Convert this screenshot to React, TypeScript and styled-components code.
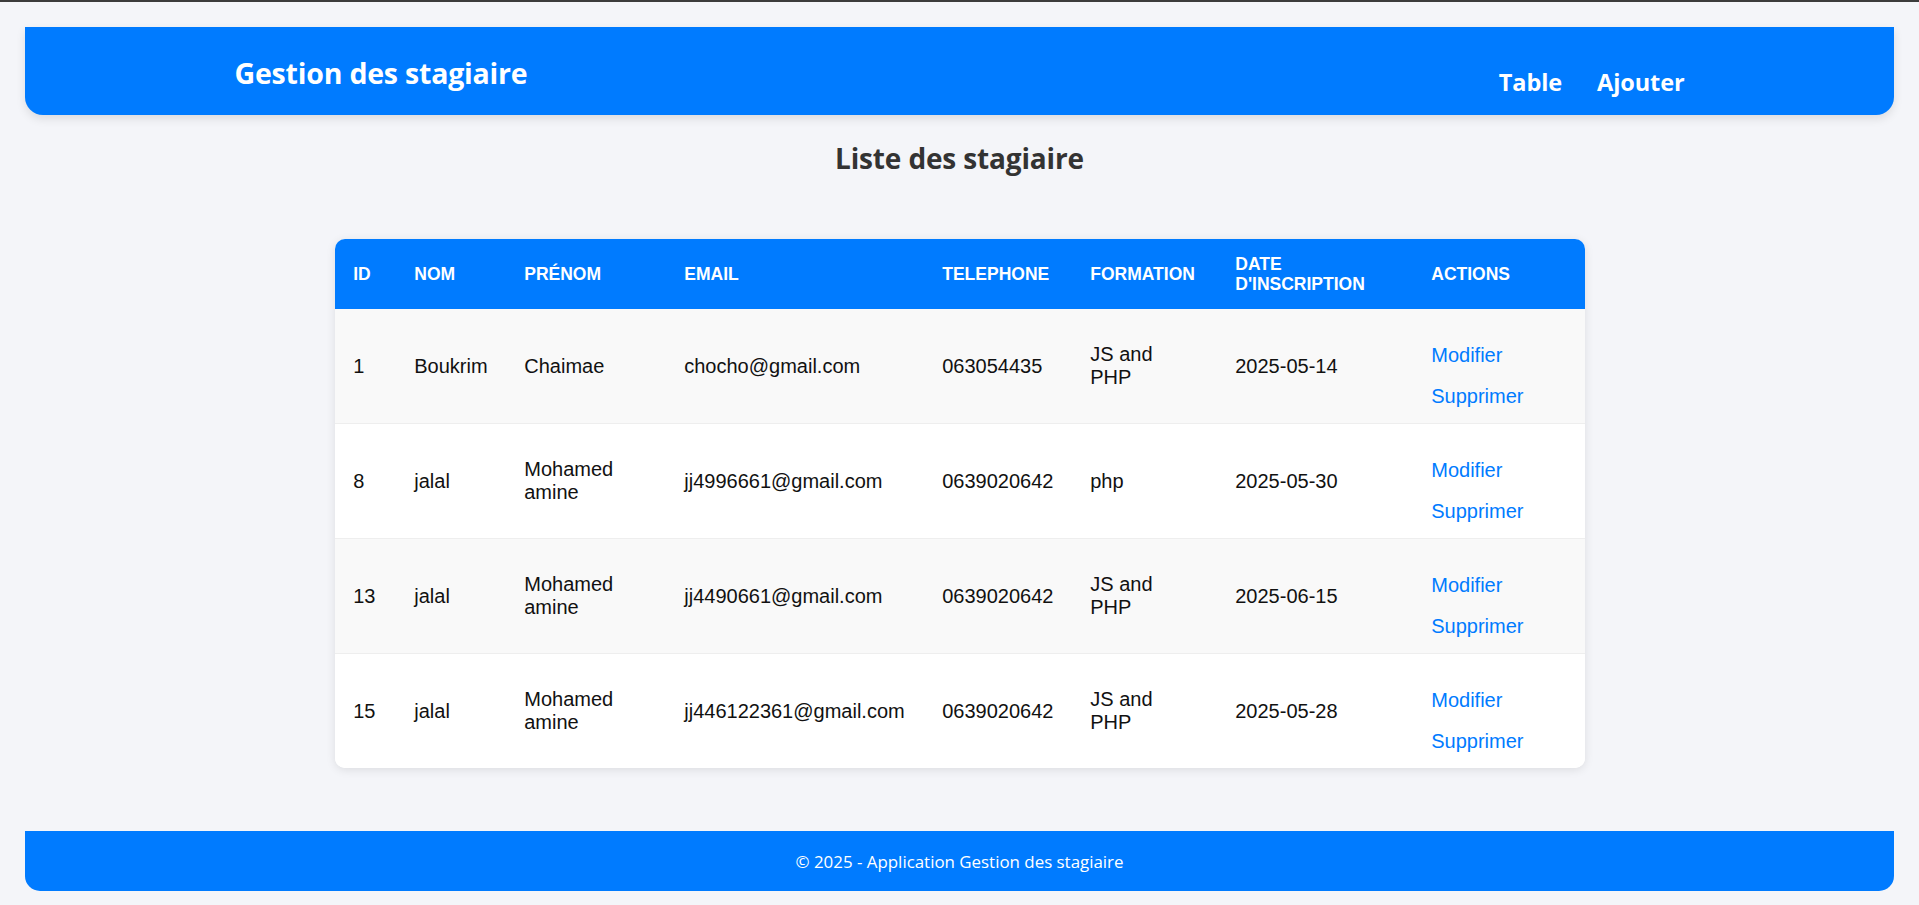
import React from 'react'
import styled, { createGlobalStyle } from 'styled-components'

const GlobalStyle = createGlobalStyle`
  body {
    margin: 0;
    background-color: #f4f5f9;
    border-top: 2px solid #3c3c3c;
    font-family: "Open Sans", "Noto Sans", sans-serif;
  }
`

const Header = styled.header`
  margin: 25px 25px 0;
  height: 88px;
  background-color: #007bff;
  border-radius: 0 0 18px 18px;
  box-shadow: 0 4px 10px rgba(0, 0, 0, 0.1);
  color: #fff;
`

const HeaderInner = styled.div`
  max-width: 1450px;
  height: 100%;
  margin: 0 auto;
  display: flex;
  justify-content: space-between;
  align-items: center;
`

const Logo = styled.h1`
  margin: 0;
  padding-top: 4px;
  font-size: 28.5px;
  font-weight: 700;
  letter-spacing: -0.2px;
`

const Nav = styled.nav`
  display: flex;
  gap: 35px;
  padding-top: 22px;
`

const NavLink = styled.a`
  color: #fff;
  font-size: 23.5px;
  font-weight: 700;
  letter-spacing: -0.1px;
  text-decoration: none;
  cursor: pointer;
`

const Title = styled.h2`
  margin: 23px 0 0;
  text-align: center;
  font-size: 28px;
  line-height: 40px;
  font-weight: 700;
  letter-spacing: -0.15px;
  color: #333;
`

const TableCard = styled.div`
  width: 1250px;
  margin: 61px auto 0;
  background-color: #fff;
  border-radius: 10px;
  overflow: hidden;
  box-shadow: 0 2px 10px rgba(0, 0, 0, 0.1);
`

const Table = styled.table`
  width: 100%;
  border-collapse: collapse;
  table-layout: fixed;
  font-family: "Liberation Sans", Arial, sans-serif;
`

const Th = styled.th`
  padding: 15px 18.75px;
  background-color: #007bff;
  color: #fff;
  font-size: 17.5px;
  line-height: 20px;
  font-weight: 700;
  text-transform: uppercase;
  text-align: left;
  vertical-align: middle;
`

const Row = styled.tr`
  background-color: #fff;
  border-bottom: 1px solid #eee;

  &:nth-child(odd) {
    background-color: #f9f9f9;
  }

  &:last-child {
    border-bottom: 0;
  }
`

const Td = styled.td<{ $nowrap?: boolean }>`
  padding: 18.75px;
  font-size: 20px;
  line-height: 23px;
  color: #111;
  vertical-align: middle;
  white-space: ${(p) => (p.$nowrap ? 'nowrap' : 'normal')};
`

const ActionsCell = styled.td`
  padding: 35px 18.75px 15px;
  font-size: 20px;
  line-height: 23px;
  vertical-align: middle;
`

const ActionLink = styled.a`
  display: block;
  color: #007bff;
  text-decoration: none;
  cursor: pointer;

  & + & {
    margin-top: 18px;
  }
`

const Footer = styled.footer`
  margin: 63px 25px 0;
  height: 60px;
  display: flex;
  align-items: center;
  justify-content: center;
  background-color: #007bff;
  border-radius: 0 0 15px 15px;
  color: #fff;
  font-size: 16.9px;
`

const columns = [
  { label: 'ID', width: 61 },
  { label: 'Nom', width: 110 },
  { label: 'Prénom', width: 160 },
  { label: 'Email', width: 258 },
  { label: 'Telephone', width: 148 },
  { label: 'Formation', width: 145 },
  { label: "Date d'inscription", width: 196 },
  { label: 'Actions', width: 172 },
]

const stagiaires = [
  { id: 1, nom: 'Boukrim', prenom: 'Chaimae', email: 'chocho@gmail.com', tel: '063054435', formation: 'JS and PHP', date: '2025-05-14' },
  { id: 8, nom: 'jalal', prenom: 'Mohamed amine', email: 'jj4996661@gmail.com', tel: '0639020642', formation: 'php', date: '2025-05-30' },
  { id: 13, nom: 'jalal', prenom: 'Mohamed amine', email: 'jj4490661@gmail.com', tel: '0639020642', formation: 'JS and PHP', date: '2025-06-15' },
  { id: 15, nom: 'jalal', prenom: 'Mohamed amine', email: 'jj446122361@gmail.com', tel: '0639020642', formation: 'JS and PHP', date: '2025-05-28' },
]

export default function App() {
  return (
    <>
      <GlobalStyle />
      <Header>
        <HeaderInner>
          <Logo>Gestion des stagiaire</Logo>
          <Nav>
            <NavLink>Table</NavLink>
            <NavLink>Ajouter</NavLink>
          </Nav>
        </HeaderInner>
      </Header>

      <Title>Liste des stagiaire</Title>

      <TableCard>
        <Table>
          <colgroup>
            {columns.map((c) => (
              <col key={c.label} style={{ width: c.width }} />
            ))}
          </colgroup>
          <thead>
            <tr>
              {columns.map((c) => (
                <Th key={c.label}>{c.label}</Th>
              ))}
            </tr>
          </thead>
          <tbody>
            {stagiaires.map((s) => (
              <Row key={s.id}>
                <Td>{s.id}</Td>
                <Td>{s.nom}</Td>
                <Td>{s.prenom}</Td>
                <Td $nowrap>{s.email}</Td>
                <Td>{s.tel}</Td>
                <Td>{s.formation}</Td>
                <Td>{s.date}</Td>
                <ActionsCell>
                  <ActionLink>Modifier</ActionLink>
                  <ActionLink>Supprimer</ActionLink>
                </ActionsCell>
              </Row>
            ))}
          </tbody>
        </Table>
      </TableCard>

      <Footer>© 2025 - Application Gestion des stagiaire</Footer>
    </>
  )
}
